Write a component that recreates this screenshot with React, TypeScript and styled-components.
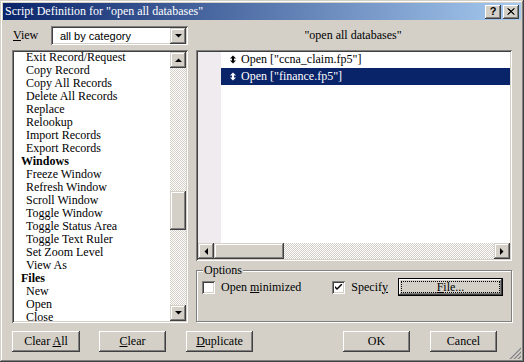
import styled, { createGlobalStyle } from "styled-components";

const GlobalStyle = createGlobalStyle`
  html, body {
    margin: 0;
    padding: 0;
    background: #d4d0c8;
  }
`;

const raised = `
  box-shadow: inset -1px -1px #404040, inset 1px 1px #fff,
    inset -2px -2px #808080, inset 2px 2px #d4d0c8;
`;

const scrollRaised = `
  box-shadow: inset -1px -1px #404040, inset 1px 1px #d4d0c8,
    inset -2px -2px #808080, inset 2px 2px #fff;
`;

const sunken = `
  box-shadow: inset 1px 1px #808080, inset -1px -1px #fff,
    inset 2px 2px #404040, inset -2px -2px #d4d0c8;
`;

const dither = `
  background: repeating-conic-gradient(#fff 0 25%, #d4d0c8 0 50%) 0 0 / 2px 2px;
`;

const stepItems = [
  { label: "Exit Record/Request" },
  { label: "Copy Record" },
  { label: "Copy All Records" },
  { label: "Delete All Records" },
  { label: "Replace" },
  { label: "Relookup" },
  { label: "Import Records" },
  { label: "Export Records" },
  { label: "Windows", head: true },
  { label: "Freeze Window" },
  { label: "Refresh Window" },
  { label: "Scroll Window" },
  { label: "Toggle Window" },
  { label: "Toggle Status Area" },
  { label: "Toggle Text Ruler" },
  { label: "Set Zoom Level" },
  { label: "View As" },
  { label: "Files", head: true },
  { label: "New" },
  { label: "Open" },
  { label: "Close" },
];

const scriptLines = [
  { text: 'Open ["ccna_claim.fp5"]', selected: false },
  { text: 'Open ["finance.fp5"]', selected: true },
];

const Arrow = ({ dir }: { dir: "up" | "down" | "left" | "right" }) => {
  const pts = {
    up: "0,4 7,4 3.5,0.5",
    down: "0,0 7,0 3.5,3.5",
    left: "4,0 4,7 0.5,3.5",
    right: "0,0 0,7 3.5,3.5",
  }[dir];
  const vertical = dir === "up" || dir === "down";
  return (
    <svg width={vertical ? 7 : 4} height={vertical ? 4 : 7} viewBox={vertical ? "0 0 7 4" : "0 0 4 7"}>
      <polygon points={pts} fill="#000" />
    </svg>
  );
};

const StepIcon = ({ color }: { color: string }) => (
  <svg width="6" height="9" viewBox="0 0 6 9">
    <polygon points="0,3.5 6,3.5 3,0.5" fill={color} />
    <polygon points="0,5.5 6,5.5 3,8.5" fill={color} />
    <rect x="2" y="3" width="2" height="3" fill={color} />
  </svg>
);

export default function App() {
  return (
    <>
      <GlobalStyle />
      <Window>
        <TitleBar>
          <TitleText>Script Definition for "open all databases"</TitleText>
          <TitleButton>
            <HelpGlyph>?</HelpGlyph>
          </TitleButton>
          <TitleButton $gap>
            <svg width="8" height="7" viewBox="0 0 8 7">
              <path d="M0.5 0.5 L7 6.5 M1.5 0.5 L7.5 6.5 M7 0.5 L0.5 6.5 M7.5 0.5 L1 6.5" stroke="#000" strokeWidth="1" />
            </svg>
          </TitleButton>
        </TitleBar>

        <Body>
          <Main>
            <LeftColumn>
              <ViewRow>
                <Label>
                  <u>V</u>iew
                </Label>
                <Combo>
                  <ComboText>all by category</ComboText>
                  <ScrollButton>
                    <Arrow dir="down" />
                  </ScrollButton>
                </Combo>
              </ViewRow>
              <StepList>
                <StepItems>
                  {stepItems.map((item) => (
                    <StepItem key={item.label} $head={!!item.head}>
                      {item.label}
                    </StepItem>
                  ))}
                </StepItems>
                <VScroll>
                  <ScrollButton>
                    <Arrow dir="up" />
                  </ScrollButton>
                  <VTrack>
                    <VThumb />
                  </VTrack>
                  <ScrollButton>
                    <Arrow dir="down" />
                  </ScrollButton>
                </VScroll>
              </StepList>
            </LeftColumn>

            <RightColumn>
              <ScriptTitle>"open all databases"</ScriptTitle>
              <ScriptBox>
                <ScriptBody>
                  <Gutter />
                  <ScriptLines>
                    {scriptLines.map((line) => (
                      <ScriptLine key={line.text} $selected={line.selected}>
                        <StepIcon color={line.selected ? "#fff" : "#000"} />
                        <span>{line.text}</span>
                      </ScriptLine>
                    ))}
                  </ScriptLines>
                </ScriptBody>
                <HScroll>
                  <ScrollButton>
                    <Arrow dir="left" />
                  </ScrollButton>
                  <HThumb />
                  <HTrack />
                  <ScrollButton>
                    <Arrow dir="right" />
                  </ScrollButton>
                </HScroll>
              </ScriptBox>
              <Options>
                <Legend>Options</Legend>
                <OptionRow>
                  <Check>
                    <CheckBox />
                    <span>
                      Open <u>m</u>inimized
                    </span>
                  </Check>
                  <Check $push>
                    <CheckBox>
                      <svg width="7" height="7" viewBox="0 0 7 7">
                        <path d="M0 2 L0 4 L2 6 L7 1 L7 -1 L2 4 Z" fill="#000" />
                      </svg>
                    </CheckBox>
                    <span>
                      Specif<u>y</u>
                    </span>
                  </Check>
                  <DefaultButton>
                    <FocusRing>
                      <u>F</u>ile...
                    </FocusRing>
                  </DefaultButton>
                </OptionRow>
              </Options>
            </RightColumn>
          </Main>

          <ButtonRow>
            <ButtonGroup $gap={19}>
              <PushButton $w={68}>
                Clear <u>A</u>ll
              </PushButton>
              <PushButton $w={67}>
                <u>C</u>lear
              </PushButton>
            </ButtonGroup>
            <ButtonGroup $gap={20} $ml="20px">
              <PushButton $w={67}>
                <u>D</u>uplicate
              </PushButton>
            </ButtonGroup>
            <ButtonGroup $gap={20} $ml="auto">
              <PushButton $w={67}>OK</PushButton>
              <PushButton $w={67}>Cancel</PushButton>
            </ButtonGroup>
          </ButtonRow>
        </Body>

        <Grip>
          <svg width="12" height="12" viewBox="0 0 12 12">
            <path d="M11 1 L1 11 M11 5 L5 11 M11 9 L9 11" stroke="#fff" strokeWidth="1" />
            <path d="M12 1 L1 12 M12 5 L5 12 M12 9 L9 12" stroke="#808080" strokeWidth="1.4" />
          </svg>
        </Grip>
      </Window>
    </>
  );
}

const Window = styled.div`
  position: relative;
  width: 524px;
  height: 362px;
  box-sizing: border-box;
  padding: 3px;
  display: flex;
  flex-direction: column;
  background: #d4d0c8;
  box-shadow: inset -1px -1px #404040, inset 1px 1px #d4d0c8,
    inset -2px -2px #808080, inset 2px 2px #fff;
  font-family: "Liberation Serif", "Times New Roman", serif;
  font-size: 12px;
  color: #000;
`;

const TitleBar = styled.div`
  height: 17px;
  display: flex;
  align-items: center;
  padding: 0 2px 0 2px;
  background: linear-gradient(to right, #0a246a, #a6caf0);
`;

const TitleText = styled.div`
  flex: 1;
  color: #fff;
  font-size: 12px;
  white-space: nowrap;
`;

const TitleButton = styled.div<{ $gap?: boolean }>`
  width: 16px;
  height: 14px;
  margin-left: ${(p) => (p.$gap ? "2px" : "0")};
  display: flex;
  align-items: center;
  justify-content: center;
  background: #d4d0c8;
  ${raised}
`;

const HelpGlyph = styled.span`
  font-family: "Liberation Sans", Arial, sans-serif;
  font-weight: bold;
  font-size: 11px;
  line-height: 11px;
`;

const Body = styled.div`
  flex: 1;
  display: flex;
  flex-direction: column;
  padding: 6px 9px 0 9px;
`;

const Main = styled.div`
  display: flex;
  gap: 8px;
`;

const LeftColumn = styled.div`
  width: 176px;
  display: flex;
  flex-direction: column;
  gap: 5px;
`;

const ViewRow = styled.div`
  height: 19px;
  display: flex;
  align-items: center;
  justify-content: space-between;
`;

const Label = styled.span`
  padding-left: 1px;
`;

const Combo = styled.div`
  width: 137px;
  height: 19px;
  box-sizing: border-box;
  padding: 2px;
  display: flex;
  align-items: center;
  background: #fff;
  ${sunken}
`;

const ComboText = styled.span`
  flex: 1;
  padding-left: 7px;
  font-family: "Liberation Sans", Arial, sans-serif;
  font-size: 11px;
`;

const ScrollButton = styled.div`
  width: 16px;
  height: 16px;
  flex: none;
  box-sizing: border-box;
  display: flex;
  align-items: center;
  justify-content: center;
  background: #d4d0c8;
  ${scrollRaised}
`;

const StepList = styled.div`
  height: 273px;
  box-sizing: border-box;
  padding: 2px;
  display: flex;
  background: #fff;
  ${sunken}
`;

const StepItems = styled.div`
  flex: 1;
  overflow: hidden;
  margin-top: -1px;
`;

const StepItem = styled.div<{ $head: boolean }>`
  height: 13px;
  line-height: 13px;
  padding-left: ${(p) => (p.$head ? "7px" : "12px")};
  font-weight: ${(p) => (p.$head ? "bold" : "normal")};
  white-space: nowrap;
`;

const VScroll = styled.div`
  width: 16px;
  display: flex;
  flex-direction: column;
`;

const VTrack = styled.div`
  flex: 1;
  ${dither}
`;

const VThumb = styled.div`
  height: 39px;
  margin-top: 123px;
  background: #d4d0c8;
  ${scrollRaised}
`;

const RightColumn = styled.div`
  width: 316px;
  display: flex;
  flex-direction: column;
`;

const ScriptTitle = styled.div`
  height: 19px;
  line-height: 19px;
  margin-bottom: 5px;
  text-align: center;
  padding-right: 2px;
`;

const ScriptBox = styled.div`
  height: 211px;
  box-sizing: border-box;
  padding: 2px;
  display: flex;
  flex-direction: column;
  background: #fff;
  ${sunken}
`;

const ScriptBody = styled.div`
  flex: 1;
  display: flex;
`;

const Gutter = styled.div`
  width: 23px;
  background: #efebef;
`;

const ScriptLines = styled.div`
  flex: 1;
  display: flex;
  flex-direction: column;
  margin-top: -1px;
`;

const ScriptLine = styled.div<{ $selected: boolean }>`
  height: 17px;
  display: flex;
  align-items: center;
  gap: 5px;
  padding-left: 9px;
  background: ${(p) => (p.$selected ? "#0a246a" : "transparent")};
  color: ${(p) => (p.$selected ? "#fff" : "#000")};
  white-space: nowrap;
`;

const HScroll = styled.div`
  height: 16px;
  display: flex;
`;

const HThumb = styled.div`
  width: 70px;
  background: #d4d0c8;
  ${scrollRaised}
`;

const HTrack = styled.div`
  flex: 1;
  ${dither}
`;

const Options = styled.fieldset`
  height: 58px;
  min-width: 0;
  box-sizing: border-box;
  margin: 3px 0 0 0;
  padding: 0 8px 0 5px;
  border: 1px solid #808080;
  box-shadow: inset 1px 1px #fff, 1px 1px #fff;
`;

const Legend = styled.legend`
  margin-left: 1px;
  padding: 0 1px;
  line-height: 13px;
  background: #d4d0c8;
`;

const OptionRow = styled.div`
  display: flex;
  align-items: center;
  height: 20px;
`;

const Check = styled.label<{ $push?: boolean }>`
  display: flex;
  align-items: center;
  gap: 6px;
  margin-left: ${(p) => (p.$push ? "auto" : "0")};
  white-space: nowrap;
`;

const CheckBox = styled.span`
  width: 13px;
  height: 13px;
  box-sizing: border-box;
  display: flex;
  align-items: center;
  justify-content: center;
  background: #fff;
  ${sunken}
`;

const DefaultButton = styled.div`
  width: 105px;
  height: 18px;
  flex: none;
  margin-left: 10px;
  box-sizing: border-box;
  padding: 2px;
  border: 1px solid #000;
  display: flex;
  background: #d4d0c8;
  ${raised}
`;

const FocusRing = styled.span`
  flex: 1;
  display: flex;
  align-items: center;
  justify-content: center;
  border: 1px dotted #000;
  line-height: 12px;
`;

const ButtonRow = styled.div`
  display: flex;
  margin-top: 8px;
  padding-right: 15px;
`;

const ButtonGroup = styled.div<{ $gap: number; $ml?: string }>`
  display: flex;
  gap: ${(p) => p.$gap}px;
  margin-left: ${(p) => p.$ml ?? "0"};
`;

const PushButton = styled.button<{ $w: number }>`
  width: ${(p) => p.$w}px;
  height: 21px;
  padding: 0;
  margin: 0;
  border: none;
  background: #d4d0c8;
  font-family: "Liberation Serif", "Times New Roman", serif;
  font-size: 12px;
  color: #000;
  ${raised}
`;

const Grip = styled.div`
  position: absolute;
  right: 3px;
  bottom: 3px;
  width: 12px;
  height: 12px;
  line-height: 0;
`;
